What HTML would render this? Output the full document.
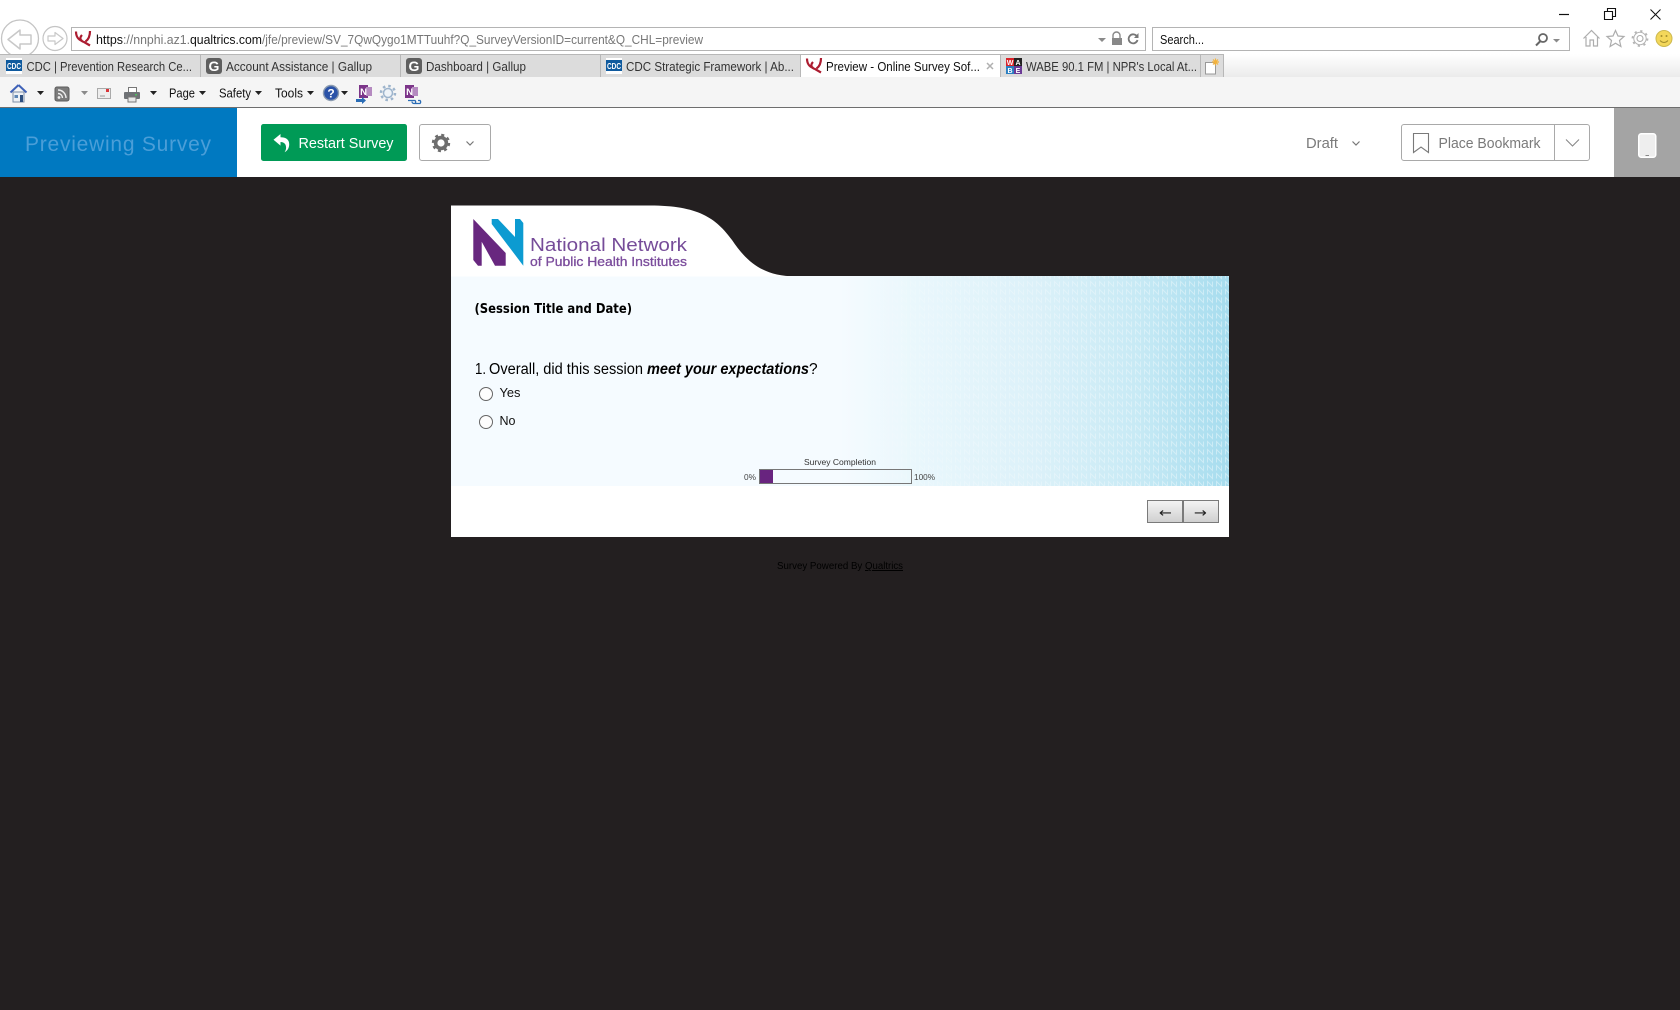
<!DOCTYPE html>
<html lang="en"><head><meta charset="utf-8"><title>Preview - Online Survey Software</title>
<style>
html,body{margin:0;padding:0;background:#231f20;width:1680px;height:1010px;overflow:hidden}
svg{display:block;position:absolute;left:0;top:0}
text{font-family:"Liberation Sans",sans-serif;white-space:pre}
.c{font-size:12.5px;fill:#444}
.t{font-size:12.5px;fill:#333}
.m{font-size:12.5px;fill:#111}
</style></head><body>
<svg width="1680" height="1010" viewBox="0 0 1680 1010" xmlns="http://www.w3.org/2000/svg">
<defs>
<linearGradient id="bg" gradientUnits="userSpaceOnUse" x1="451" x2="1229" y1="0" y2="0">
<stop offset="0" stop-color="#f5fbff"/><stop offset=".5" stop-color="#f5fbff"/><stop offset=".6" stop-color="#e9f7fc"/><stop offset=".75" stop-color="#dcf1f9"/><stop offset=".88" stop-color="#c8eaf5"/><stop offset="1" stop-color="#a6dcee"/></linearGradient>
<linearGradient id="tabr" x1="0" x2="0" y1="0" y2="1"><stop offset="0" stop-color="#fff"/><stop offset="1" stop-color="#ebebeb"/></linearGradient>
<linearGradient id="btn" x1="0" x2="0" y1="0" y2="1"><stop offset="0" stop-color="#f4f4f4"/><stop offset="1" stop-color="#cfcfcf"/></linearGradient>
<linearGradient id="fade" gradientUnits="userSpaceOnUse" x1="855" x2="1229" y1="0" y2="0"><stop offset="0" stop-color="#fff" stop-opacity=".05"/><stop offset=".2" stop-color="#fff" stop-opacity=".18"/><stop offset="1" stop-color="#fff" stop-opacity=".4"/></linearGradient>
<pattern id="nn" width="9" height="8" patternUnits="userSpaceOnUse"><path d="M1.500 6.500V1.500L6.500 6.500V1.500" fill="none" stroke="#fff" stroke-width="1"/></pattern>
<mask id="mk"><rect x="855" y="276" width="374" height="210" fill="url(#fade)"/></mask>
<g id="qf"><path d="M1 0.500C1 5.500 3.500 9 7.500 10M15 0C15 5 13.500 8.500 10.500 10.500M7 4C4 7 5.500 10 9 11L15 14.500" fill="none" stroke="#ac1c30" stroke-width="2.200"/></g>
<g id="cdc"><rect width="16" height="16" fill="#fff"/><rect y="2" width="16" height="11" fill="#0f5a9e"/><text x="8" y="11" text-anchor="middle" style="font-size:8.500px;font-weight:700;fill:#fff" textLength="14" lengthAdjust="spacingAndGlyphs">CDC</text></g>
<g id="g"><rect width="16" height="16" rx="3" fill="#5f5f5f"/><text x="8" y="13" text-anchor="middle" style="font-size:14px;font-weight:700;fill:#fff">G</text></g>
<g id="nr"><rect x="2" y="0" width="9" height="13" fill="#7c3589"/><rect x="9" y="2" width="6" height="9" fill="#b58ac0"/><text x="6.500" y="10" text-anchor="middle" style="font-size:9.500px;font-weight:700;fill:#fff">N</text></g>
</defs>

<!-- browser chrome -->
<rect width="1680" height="108" fill="#fff"/>
<path d="M1559 14.500h10" stroke="#111" stroke-width="1.200"/>
<path d="M1604.500 11.500h8v8h-8zM1607.500 11v-2.500h8v8h-3" fill="none" stroke="#111" stroke-width="1.100"/>
<path d="M1650.500 9.500l10 10M1660.500 9.500l-10 10" stroke="#111" stroke-width="1"/>
<circle cx="20" cy="38.500" r="18.500" fill="#fff" stroke="#c4c4c4" stroke-width="1.300"/>
<path d="M31 35h-11v-5l-12 9.500 12 9.500v-5h11z" fill="none" stroke="#c8c8c8" stroke-width="1.500" stroke-linejoin="round"/>
<circle cx="55" cy="38.500" r="12" fill="#fff" stroke="#c4c4c4" stroke-width="1.200"/>
<path d="M48 36h7v-3.500l8 6-8 6v-3.500h-7z" fill="none" stroke="#c8c8c8" stroke-width="1.200" stroke-linejoin="round"/>
<rect x="71.500" y="27.500" width="1074" height="23" fill="#fff" stroke="#b4b4b4"/>
<use href="#qf" x="75" y="31"/>
<text x="96" y="44" class="c" style="fill:#111" textLength="27" lengthAdjust="spacingAndGlyphs">https</text>
<text x="123" y="44" class="c" style="fill:#777" textLength="67" lengthAdjust="spacingAndGlyphs">://nnphi.az1.</text>
<text x="190" y="44" class="c" style="fill:#111" textLength="72" lengthAdjust="spacingAndGlyphs">qualtrics.com</text>
<text x="262" y="44" class="c" style="fill:#777" textLength="441" lengthAdjust="spacingAndGlyphs">/jfe/preview/SV_7QwQygo1MTTuuhf?Q_SurveyVersionID=current&amp;Q_CHL=preview</text>
<path d="M1098 38h8l-4 4z" fill="#8a8a8a"/>
<path d="M1113 38v-2.500a3.500 3.500 0 0 1 7 0v2.500" fill="none" stroke="#888" stroke-width="1.400"/><rect x="1112" y="38" width="10" height="7" fill="#888"/>
<path d="M1137 36.500a4.500 4.500 0 1 0 .5 3.500" fill="none" stroke="#777" stroke-width="1.800"/><path d="M1138.500 33v5h-4.500z" fill="#777"/>
<rect x="1152.500" y="27.500" width="417" height="23" fill="#fff" stroke="#b4b4b4"/>
<text x="1160" y="44" class="m" textLength="44" lengthAdjust="spacingAndGlyphs">Search...</text>
<circle cx="1543" cy="38" r="4" fill="none" stroke="#666" stroke-width="1.800"/><path d="M1540 41.500l-4 4" stroke="#666" stroke-width="2"/>
<path d="M1553 39h7l-3.500 3.500z" fill="#8a8a8a"/>
<path d="M1583.500 38.500l8-8 8 8M1586 37v9h4v-6h3.500v6h4v-9" fill="none" stroke="#adadad" stroke-width="1.200"/>
<path d="M1615.500 30.500l2.500 5.500 6 .5-4.500 4 1.400 6-5.400-3.300-5.400 3.300 1.400-6-4.500-4 6-.5z" fill="none" stroke="#adadad" stroke-width="1.200"/>
<circle cx="1640" cy="38.500" r="3" fill="none" stroke="#adadad" stroke-width="1.100"/>
<circle cx="1640" cy="38.500" r="6.200" fill="none" stroke="#b4b4b4" stroke-width="1"/>
<circle cx="1640" cy="38.500" r="7.500" fill="none" stroke="#b4b4b4" stroke-width="1.800" stroke-dasharray="2.200 3.690"/>
<circle cx="1664" cy="38.500" r="8" fill="#f3d75a" stroke="#cdb94f"/>
<path d="M1660 40.500q4 4 8 0" fill="none" stroke="#a58f2e"/><circle cx="1661.500" cy="36" r="1" fill="#a58f2e"/><circle cx="1666.500" cy="36" r="1" fill="#a58f2e"/>

<rect x="1223" y="54" width="457" height="23" fill="url(#tabr)"/>
<rect x="0" y="54" width="1223" height="23" fill="#dcdcdc"/>
<path d="M0 54.500H1223.500V77" fill="none" stroke="#b7b7b7"/>
<path d="M200.500 55V77M400.500 55V77M600.500 55V77M1000.500 55V77M1200.500 55V77" stroke="#b7b7b7"/>
<rect x="800" y="55" width="200" height="23" fill="#fff"/>
<path d="M800.500 55V77M1000.500 55V77" stroke="#b7b7b7"/>
<use href="#cdc" x="6" y="58"/>
<text x="26.500" y="71" class="t" textLength="165.500" lengthAdjust="spacingAndGlyphs">CDC | Prevention Research Ce...</text>
<use href="#g" x="206" y="58"/>
<text x="226" y="71" class="t" textLength="146" lengthAdjust="spacingAndGlyphs">Account Assistance | Gallup</text>
<use href="#g" x="406" y="58"/>
<text x="426" y="71" class="t" textLength="100" lengthAdjust="spacingAndGlyphs">Dashboard | Gallup</text>
<use href="#cdc" x="606" y="58"/>
<text x="626" y="71" class="t" textLength="168" lengthAdjust="spacingAndGlyphs">CDC Strategic Framework | Ab...</text>
<use href="#qf" x="806" y="58"/>
<text x="826" y="71" class="t" style="fill:#111" textLength="154" lengthAdjust="spacingAndGlyphs">Preview - Online Survey Sof...</text>
<path d="M987 63l6 6M993 63l-6 6" stroke="#b0b0b0" stroke-width="1.500"/>
<g transform="translate(1006 58)"><rect width="16" height="16" fill="#222"/><rect width="8" height="8" fill="#d8232a"/><rect y="8" width="8" height="8" fill="#2a7fc1"/><rect x="8" y="8" width="8" height="8" fill="#6b3a96"/><text x="4" y="7" text-anchor="middle" style="font-size:7px;fill:#fff;font-weight:700">W</text><text x="12" y="7" text-anchor="middle" style="font-size:7px;fill:#fff;font-weight:700">A</text><text x="4" y="15" text-anchor="middle" style="font-size:7px;fill:#fff;font-weight:700">B</text><text x="12" y="15" text-anchor="middle" style="font-size:7px;fill:#fff;font-weight:700">E</text></g>
<text x="1026" y="71" class="t" textLength="171" lengthAdjust="spacingAndGlyphs">WABE 90.1 FM | NPR's Local At...</text>
<path d="M1205.500 62.500h8l2 2v9.500h-10z" fill="#fff" stroke="#999"/>
<path d="M1215.500 58.500v7M1212 62h7M1213 59.500l5 5M1218 59.500l-5 5" stroke="#f4b23a" stroke-width="1.200"/>

<rect y="77" width="1680" height="30" fill="#f5f5f5"/>
<rect y="107" width="1680" height="1" fill="#6e6e6e"/>
<path d="M13 92v10h11v-10z" fill="#eef1f5" stroke="#7f8fa6"/>
<path d="M18.500 85l-8 7.500M18.500 85l8 7.500" stroke="#3f62b8" stroke-width="2"/><rect x="20" y="95" width="3" height="7" fill="#2d4f80"/><rect x="14.500" y="95" width="3.500" height="3" fill="#5f87b5"/>
<path d="M37 91h7l-3.500 4z" fill="#222"/>
<rect x="55" y="87" width="14" height="14" rx="2" fill="#7b7b7b" stroke="#5c5c5c"/>
<path d="M58 90a8 8 0 0 1 8 8M58 93.500a4.500 4.500 0 0 1 4.500 4.500" fill="none" stroke="#eee" stroke-width="1.400"/><circle cx="59" cy="97.500" r="1.400" fill="#eee"/>
<path d="M81 91h7l-3.500 4z" fill="#8a8a8a"/>
<rect x="97.500" y="88.500" width="13" height="10" fill="#eee" stroke="#aaa"/><rect x="106" y="89" width="3" height="3" fill="#d8363a"/><path d="M100 96h5" stroke="#999"/>
<path d="M128.500 87.500h8v5h-8z" fill="#fff" stroke="#777"/><rect x="124" y="92" width="16" height="7" rx="1" fill="#6f7276"/><rect x="128" y="97" width="8" height="5" fill="#e8e8e8" stroke="#777"/><rect x="135" y="94" width="2" height="1.500" fill="#4fbf5f"/>
<path d="M150 91h7l-3.500 4z" fill="#222"/>
<text x="169" y="97.500" class="m" textLength="26" lengthAdjust="spacingAndGlyphs">Page</text>
<path d="M199 91h7l-3.500 4z" fill="#222"/>
<text x="219" y="97.500" class="m" textLength="32" lengthAdjust="spacingAndGlyphs">Safety</text>
<path d="M255 91h7l-3.500 4z" fill="#222"/>
<text x="275" y="97.500" class="m" textLength="28" lengthAdjust="spacingAndGlyphs">Tools</text>
<path d="M307 91h7l-3.500 4z" fill="#222"/>
<circle cx="331" cy="93" r="7.500" fill="#2b53a8" stroke="#8b9bb0" stroke-width="1.400"/>
<text x="331" y="97.500" text-anchor="middle" style="font-size:12px;font-weight:700;fill:#fff">?</text>
<path d="M341 91h7l-3.500 4z" fill="#222"/>
<use href="#nr" x="357" y="85"/><path d="M356 99h6v-2l4 3.500-4 3.500v-2h-6z" fill="#2a6cb5"/>
<circle cx="388" cy="93" r="4.500" fill="#eef3f8" stroke="#9db4cc" stroke-width="1.500"/><circle cx="388" cy="93" r="7" fill="none" stroke="#9db4cc" stroke-width="2.500" stroke-dasharray="2.500 3"/>
<use href="#nr" x="403" y="85"/><path d="M408 100.500h7a2 2 0 0 1 0 3h-2M418 100.500h2a2 2 0 0 1 0 3h-6a2 2 0 0 1-2-2" fill="none" stroke="#2a6cb5" stroke-width="1.300"/>

<rect y="108" width="1680" height="69" fill="#fff"/>
<rect y="108" width="237" height="69" fill="#0079c1"/>
<text x="25" y="151" style="font-size:21px;fill:#4a9ed8" textLength="186">Previewing Survey</text>
<rect x="261" y="124" width="146" height="37" rx="2.500" fill="#009a56"/>
<path d="M280.500 134l-7 5.800 7 5.800v-3.600c3.500 0 5.600 2 5.600 5.800 0 2-.8 3.200-1.500 4.400 3.400-1.800 4.600-5 4.600-8 0-5-3.600-7-8.700-7z" fill="#fff"/>
<text x="298.500" y="148" style="font-size:14.500px;fill:#fff" textLength="95" lengthAdjust="spacingAndGlyphs">Restart Survey</text>
<rect x="419.500" y="124.500" width="71" height="36" rx="2.500" fill="#fff" stroke="#a9a9a9"/>
<circle cx="441" cy="143" r="5.400" fill="none" stroke="#6e6e6e" stroke-width="3.600"/>
<circle cx="441" cy="143" r="8" fill="none" stroke="#6e6e6e" stroke-width="2.400" stroke-dasharray="3 3.280"/>
<path d="M466.500 141.500l3.500 3.500 3.500-3.500" fill="none" stroke="#777" stroke-width="1.200"/>
<text x="1306" y="148" style="font-size:14.500px;fill:#7a7a7a" textLength="32" lengthAdjust="spacingAndGlyphs">Draft</text>
<path d="M1352.500 141.500l3.500 3.500 3.500-3.500" fill="none" stroke="#777" stroke-width="1.200"/>
<rect x="1401.500" y="124.500" width="188" height="36" rx="2.500" fill="#fff" stroke="#a9a9a9"/>
<path d="M1554.500 125v35" stroke="#a9a9a9"/>
<path d="M1413.500 133.500h15v19l-7.500-5.500-7.500 5.500z" fill="none" stroke="#7a7a7a" stroke-width="1.100"/>
<text x="1438.500" y="148" style="font-size:14.500px;fill:#7a7a7a" textLength="102" lengthAdjust="spacingAndGlyphs">Place Bookmark</text>
<path d="M1566 139.500l6.500 6.500 6.500-6.500" fill="none" stroke="#888" stroke-width="1.100"/>
<rect x="1614" y="108" width="66" height="69" fill="#a4a4a4"/>
<rect x="1638.750" y="133.750" width="17" height="23.500" rx="2.500" fill="#eee" stroke="#fff" stroke-width="1.500"/>
<rect x="1645.500" y="155" width="3.500" height="1" fill="#888"/>

<rect x="451" y="276" width="778" height="210" fill="url(#bg)"/>
<rect x="855" y="276" width="374" height="210" fill="url(#nn)" mask="url(#mk)"/>
<path d="M451 205.500H650C698 205.500 716 218 732 240C748 264 765 276 795 276.500H451z" fill="#fff"/>
<path d="M473.300 219L505.700 253V265.700H495L481.700 241.700V265.700H478L473.300 260z" fill="#68277f"/>
<path d="M491.700 219H498L515 237V219H520L523.300 223V265.700L491.700 224z" fill="#0c9bd1"/>
<text x="530" y="251" style="font-size:18px;fill:#764c99" textLength="157" lengthAdjust="spacingAndGlyphs">National Network</text>
<text x="530" y="266" style="font-size:13px;fill:#7b4c9c;stroke:#7b4c9c;stroke-width:.3" textLength="157" lengthAdjust="spacingAndGlyphs">of Public Health Institutes</text>
<text x="474.500" y="313" style="font-family:'DejaVu Sans',sans-serif;font-size:13.500px;font-weight:700;fill:#000" textLength="157.500" lengthAdjust="spacingAndGlyphs">(Session Title and Date)</text>
<text x="475" y="374" style="font-size:15.500px;fill:#000" textLength="11" lengthAdjust="spacingAndGlyphs">1.</text>
<text x="489" y="374" style="font-size:15.500px;fill:#000" textLength="154" lengthAdjust="spacingAndGlyphs">Overall, did this session</text>
<text x="647" y="374" style="font-size:15.500px;font-weight:700;font-style:italic;fill:#000" textLength="162" lengthAdjust="spacingAndGlyphs">meet your expectations</text>
<text x="809" y="374" style="font-size:15.500px;fill:#000">?</text>
<circle cx="486" cy="394" r="6.500" fill="#fdfdfd" stroke="#666" stroke-width="1"/>
<text x="499.500" y="397" style="font-size:12.500px;fill:#111" textLength="21" lengthAdjust="spacingAndGlyphs">Yes</text>
<circle cx="486" cy="422" r="6.500" fill="#fdfdfd" stroke="#666" stroke-width="1"/>
<text x="499.500" y="425" style="font-size:12.500px;fill:#111" textLength="16" lengthAdjust="spacingAndGlyphs">No</text>
<text x="804" y="465" style="font-size:8.500px;fill:#333" textLength="72" lengthAdjust="spacingAndGlyphs">Survey Completion</text>
<text x="744" y="480" style="font-size:8.500px;fill:#444" textLength="12" lengthAdjust="spacingAndGlyphs">0%</text>
<rect x="759.500" y="469.500" width="152" height="14" fill="none" stroke="#777"/>
<rect x="760" y="470" width="13" height="13" fill="#68247f"/>
<text x="914" y="480" style="font-size:8.500px;fill:#444" textLength="21" lengthAdjust="spacingAndGlyphs">100%</text>
<rect x="451" y="486" width="778" height="51" fill="#fff"/>
<rect x="1147.500" y="500.500" width="35" height="22" fill="url(#btn)" stroke="#7a7a7a"/>
<rect x="1183.500" y="500.500" width="35" height="22" fill="url(#btn)" stroke="#7a7a7a"/>
<text x="1159" y="517" style="font-family:'DejaVu Sans',sans-serif;font-size:13px;fill:#222" textLength="13" lengthAdjust="spacingAndGlyphs">←</text>
<text x="1194" y="517" style="font-family:'DejaVu Sans',sans-serif;font-size:13px;fill:#222" textLength="13" lengthAdjust="spacingAndGlyphs">→</text>
<text x="777" y="569" style="font-size:10px;fill:#000" textLength="88" lengthAdjust="spacingAndGlyphs">Survey Powered By </text>
<text x="865" y="569" style="font-size:10px;fill:#000;text-decoration:underline" textLength="38" lengthAdjust="spacingAndGlyphs">Qualtrics</text>
</svg>
</body></html>
